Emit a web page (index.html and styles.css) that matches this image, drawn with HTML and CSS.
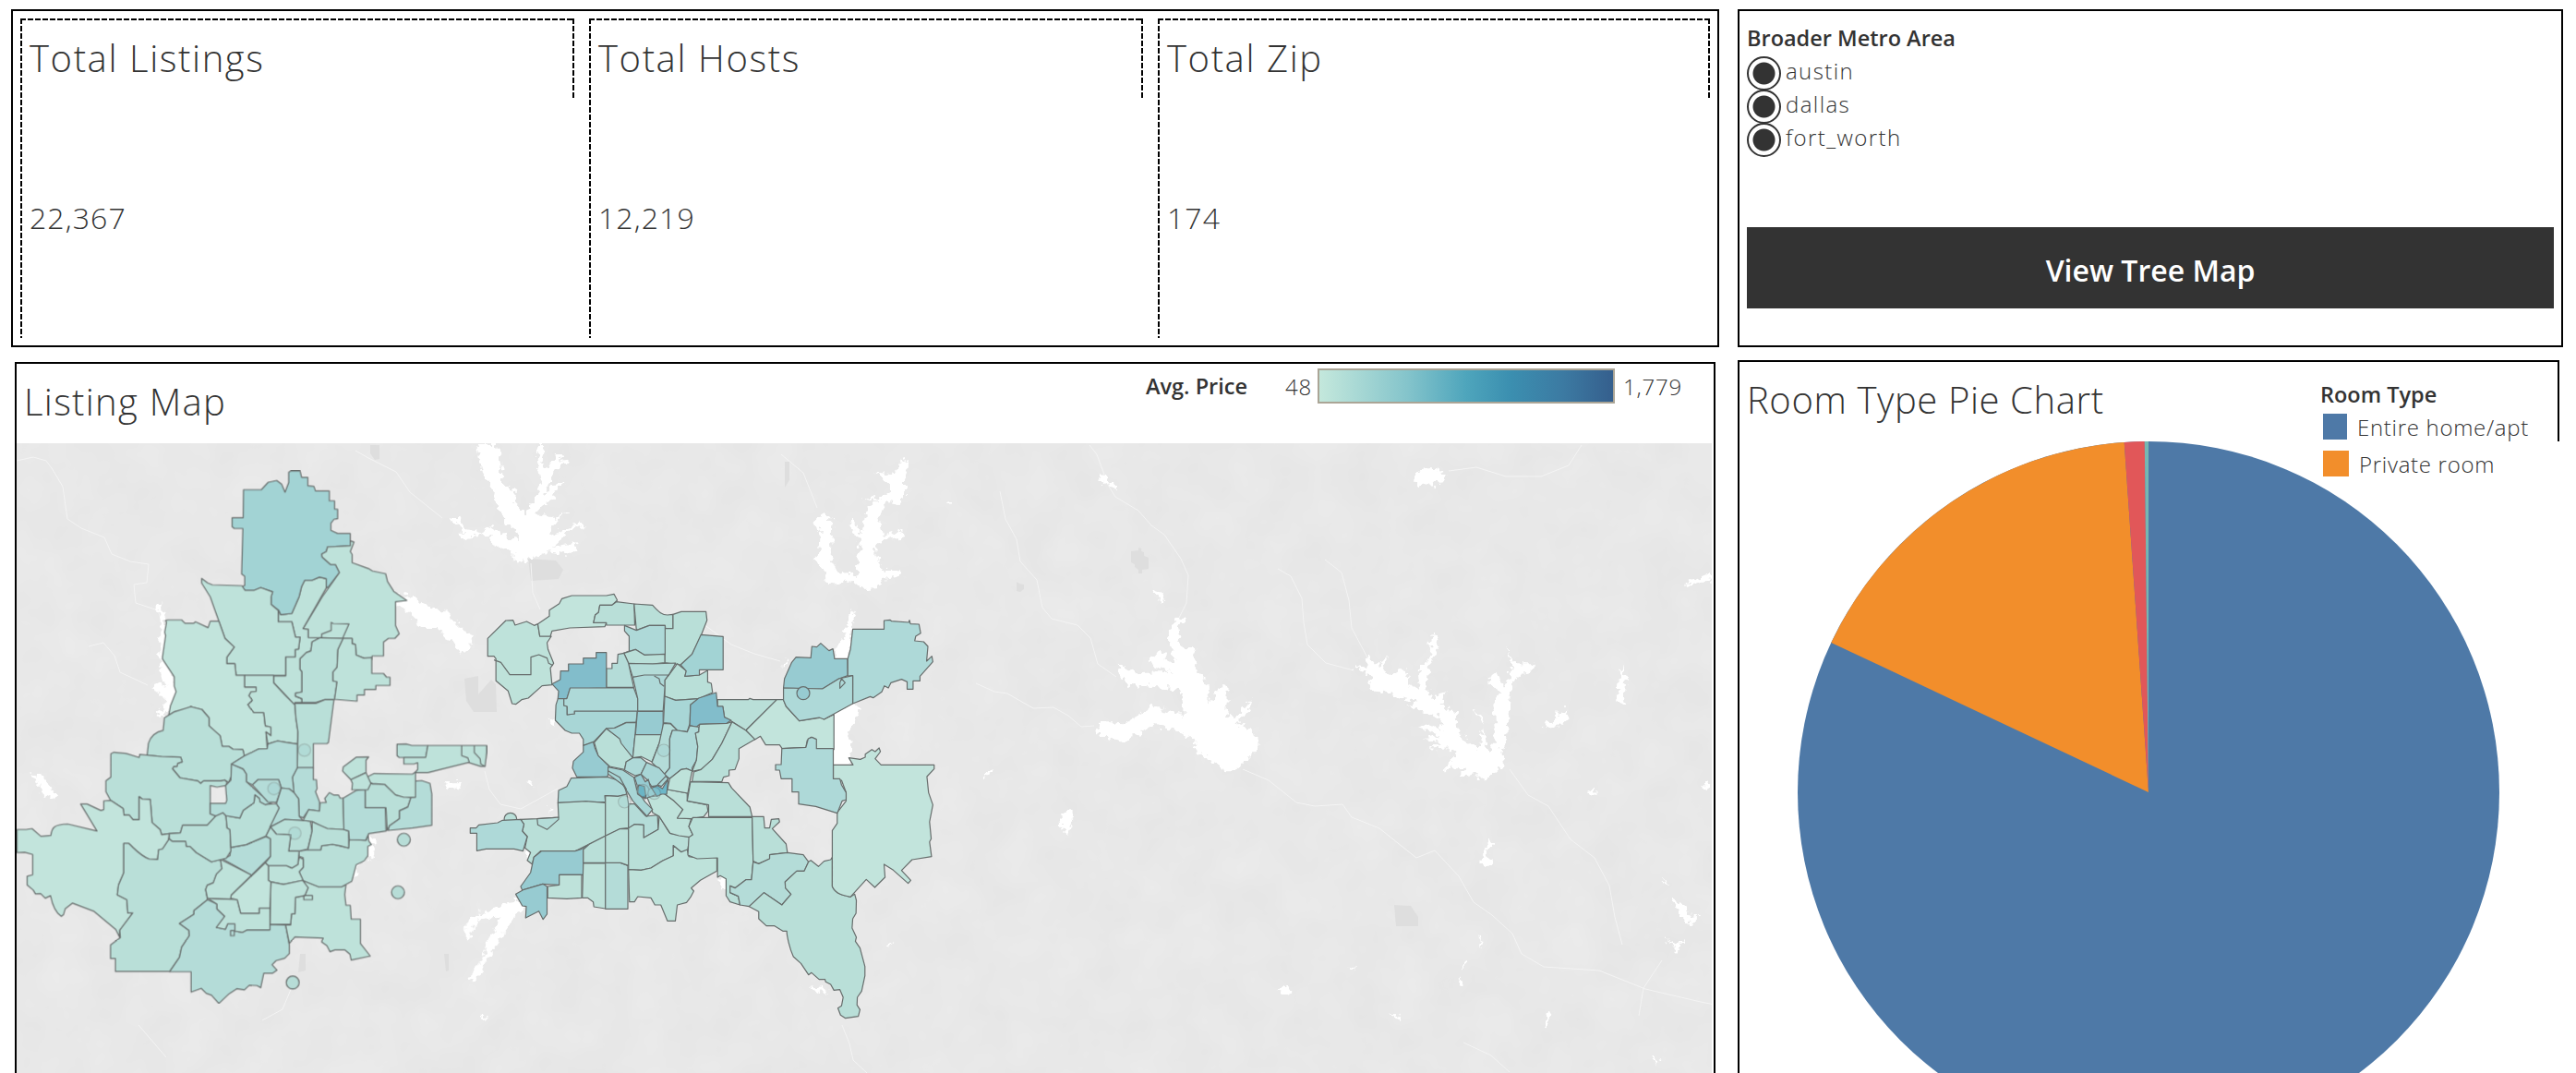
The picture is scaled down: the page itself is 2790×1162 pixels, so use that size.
FILE: index.html
```html
<!DOCTYPE html>
<html lang="en">
<head>
<meta charset="utf-8">
<title>Listings Dashboard</title>
<link rel="stylesheet" href="styles.css">
</head>
<body>
<main class="dashboard">
  <section class="kpis">
    <article class="kpi"><h2 class="title">Total Listings</h2><p class="value">22,367</p></article>
    <article class="kpi"><h2 class="title">Total Hosts</h2><p class="value">12,219</p></article>
    <article class="kpi"><h2 class="title">Total Zip</h2><p class="value">174</p></article>
  </section>

  <section class="filters">
    <h3 class="label">Broader Metro Area</h3>
    <ul class="radios">
      <li><span class="radio"></span><span class="opt">austin</span></li>
      <li><span class="radio"></span><span class="opt">dallas</span></li>
      <li><span class="radio"></span><span class="opt">fort_worth</span></li>
    </ul>
    <button class="nav-button" type="button">View Tree Map</button>
  </section>

  <section class="map-panel">
    <header class="map-head">
      <h2 class="title">Listing Map</h2>
      <div class="scale">
        <span class="label">Avg. Price</span>
        <span class="num low">48</span>
        <span class="ramp"></span>
        <span class="num high">1,779</span>
      </div>
    </header>
    <svg class="map" viewBox="18 480 1836 682" width="1836" height="682">
      <defs>
        <filter id="terrain" x="0" y="0" width="1" height="1" color-interpolation-filters="sRGB">
          <feTurbulence type="fractalNoise" baseFrequency=".022" numOctaves="3" seed="4"/>
          <feColorMatrix values=".028 0 0 0 .896  .028 0 0 0 .896  .028 0 0 0 .896  0 0 0 0 1"/>
        </filter>
        <filter id="shore" x="-.1" y="-.1" width="1.2" height="1.2">
          <feTurbulence type="fractalNoise" baseFrequency=".16" numOctaves="2" seed="7"/>
          <feDisplacementMap in="SourceGraphic" scale="12" xChannelSelector="R" yChannelSelector="G"/>
        </filter>
      </defs>
      <rect x="18" y="480" width="1836" height="682" filter="url(#terrain)"/>

      <!-- urban patches -->
      <g class="patch">
        <path d="M503 735l15-3v20l14-16 5 5 1 30h-25l-8-12zM401 482h10v15l-5 1-5-7zM325 1033h6v18l-8 2zM572 605l30 2 8 10-5 10-30 2zM850 500h5v20l-5 8zM1225 597l8-1v-3l3 1v3l3 1v4l5 2v12l-7 1v4h-4v-4l-4-3v-3l-4-2zM1101 630l3 2 5 1v5l-4 3-4-1zM481 1033h5v18l-3 1zM1510 980l18 1 8 12v10h-24z"/>
      </g>

      <!-- rivers -->
      <g class="river">
        <path d="M18 499l18-4 14 4 6 8 12 20 5 35 15 10 25 10 8 18 20 8 20 3-2 20-14 2 2 20 24 8 6 17M96 700l16-4 12 14 6 18 30 14M385 488l14 8 30 15 15 22 35 28"/>
        <path d="M150 1110l30 35M284 1105l22-12 10-24M912 1110l8 20 4 18 15 14M575 610l2 32 8 18M846 492l24 20 15 38M762 676l30 22 25 10 28 8M525 835l5 20 12 16 22 5 40-22"/>
        <path d="M1346 833l28 12 30 24 20 4 30-2 10 14 30 12 40 32 20-8 26 28 16 28 20 14 22 20 10 22 24 14 60 4 50 20 60 14 30 6 14 4"/>
        <path d="M1180 482l8 10 12 33 8 13 25 15 14 16 14 10 18 26 8 18-2 30-10 20M1083 532l6 30 12 22 4 24 18 20 6 30 10 12 28 7 14 14 8 28 20 14M1384 616l14 8 12 24 2 26 4 24 20 20 30 8M1435 606l18 14 8 30 3 30 18 34M1057 740l20 9 14 2 28 16 22-1 16 9 14 12 14-1"/>
        <path d="M1635 833l20 28 22 12 24 36 26 20 16 30 6 34 8 30M1800 1040l-20 30-5 30M1585 1129l30 14 20 18M1569 510l30-4 32 10 38 0 30-12 14-22"/>
      </g>

      <!-- lakes -->
      <g class="water" filter="url(#shore)">
        <g transform="translate(480 470) scale(.357143 .333333)">
          <path d="M100 33H162L178 100 175 150 190 170 222 180 218 225 250 262 265 235 280 200 300 160 290 110 283 33H310L300 100 315 115 345 60 368 65 350 90 384 85 335 125 305 195 320 185 345 155 372 158 340 185 330 215 300 230 275 262 335 270 385 250 340 280 325 330 420 285 430 300 395 305 330 365 405 355 400 380 350 390 310 385 250 410 215 416 210 385 150 360 145 325 75 335 55 345 45 320 70 320 15 270 50 270 70 310 120 320 145 300 200 340 235 345 225 320 190 290 170 240 150 210 155 180 120 125Z"/>
          <path d="M1390 80L1412 95 1400 150V200L1385 225 1350 220 1320 270 1330 330 1395 310 1400 335 1320 350 1310 385 1335 445 1390 442 1375 465 1335 470 1315 502 1270 504 1245 480 1195 485 1165 490 1160 450 1125 405 1140 380 1145 320 1120 285 1155 255 1180 285 1175 400 1190 440 1235 460 1260 450 1255 380 1270 360 1230 290 1235 270 1270 320 1285 240 1320 215 1270 205 1325 205 1355 185 1355 155 1310 125 1370 130Z"/>
          <path d="M1240 570L1250 590 1240 632 1226 740H1187L1190 705 1215 650ZM1175 905L1242 870 1262 890 1255 930 1225 970 1240 1000 1230 1040 1245 1082H1175Z"/>
          <path d="M0 590L30 610 60 640 85 660V700L50 690 20 660 0 650ZM315 918L345 930 340 950 325 938ZM1530 215l12 10-4 10-8-8zM1038 732l8 12-8 10z"/>
        </g>
        <g transform="translate(0 370) scale(.333333)">
          <path d="M1280 810L1340 830 1400 860 1450 880 1490 920 1532 955V1000L1500 1010 1420 930 1370 930 1330 880 1285 855Z"/>
          <path d="M505 860L525 850 530 890 540 906 560 1000 560 1090 582 1130 560 1200 520 1220 505 1210 540 1190 530 1155 490 1125 510 1110 540 1120 520 1070 520 970 525 910Z"/>
          <path d="M100 1400L135 1410 160 1450 190 1475 180 1488 140 1475 130 1440ZM1190 1595L1232 1625 1215 1638V1675L1183 1687 1160 1715 1150 1750 1140 1753 1150 1690ZM1440 1430L1500 1428 1490 1452 1460 1450ZM1560 1850L1520 1880 1510 1940 1530 1920ZM1560 2010L1520 2070 1530 2080Z"/>
        </g>
        <g transform="translate(480 780) scale(.357143 .333333)">
          <path d="M245 585L245 610 215 640 180 700 130 780 110 830 80 853 90 820 120 770 145 700 175 640 105 650 85 690 75 715 65 690 90 640 140 620 200 590Z"/>
          <path d="M245 415L266 428 255 450ZM838 510L860 515 857 550 842 545ZM1340 730L1368 718 1350 740ZM1110 865L1150 870 1168 890 1140 885ZM112 962L135 964 122 976ZM258 200L278 204 268 215ZM2 198L45 202 40 220 10 215ZM315 286l15 4-12 10z"/>
        </g>
        <g transform="translate(1140 640) scale(.465549 .333333)">
          <path d="M290 85L305 95 290 150 305 190 335 185 325 215 345 270 360 310 365 365 390 310 405 310V400L420 420 465 350 460 380 430 430 478 470V510L430 580H405L360 545 335 520 325 480 290 450 235 435 195 470 160 487 100 465 110 425 165 430 235 375 305 405 300 320 220 310 175 305 155 265 150 237 190 265 275 260 220 235 250 185 265 220 285 230 268 150Z"/>
          <path d="M735 210L750 240 780 215 765 255 790 275 820 250 830 305 855 320 850 260 875 220 885 130 900 175 875 250 870 320 885 350 915 325 905 370 940 400 945 465 990 515 1005 440 980 390 1000 410 1012 520 1025 510 1030 440 1025 370 1045 330 1010 300 1030 260 1050 310 1070 250 1055 180 1075 235 1120 235 1115 265 1085 270 1065 330 1060 470 1045 520 1048 565 1015 605 985 610 990 590 945 603 960 575 910 580 935 540 930 510 875 515 905 490 862 480 905 470 850 445 870 430 905 450 900 410 825 375 850 360 800 345 770 320 755 330 735 300 740 280 700 245 730 255Z"/>
          <path d="M18 730L35 708 50 730 35 790 20 775ZM1015 808L1028 820 1010 850 1025 885 1010 897 997 880ZM1328 245L1334 290 1328 340 1335 372 1315 360 1318 290ZM1145 420L1168 425 1170 385 1180 405 1195 382V425L1165 448 1143 438ZM1435 992L1470 1020 1485 1060 1505 1052 1478 1090 1465 1060ZM1430 1130L1450 1150 1474 1130 1452 1170ZM525 1300L540 1278 562 1312 540 1305ZM782 1368L812 1385 808 1396ZM1152 1360L1160 1362 1152 1420 1145 1418ZM955 1198L962 1208 950 1224ZM948 1255L957 1280 945 1275ZM232 0L240 -6 252 0 262 33 250 38 246 14ZM1510 635L1530 622 1525 645ZM1243 655L1262 638V660ZM1413 930L1436 960 1425 955ZM1392 1512L1412 1525 1408 1538ZM686 1216L705 1228 695 1230ZM990 1122l10 18-4 14z"/>
        </g>
        <path d="M1533 514l8-6 10-2 16 9-4 6-8 2-4 5-6-6-4 5-7 1zM1190 515l8 1 3 6-7 2zM1202 521l6 3 1 6-5-1zM1826 633l10-6 18-7v8l-16 4-10 3zM1067 836l7-3-2 6-5 2z"/>
      </g>

      <!-- Fort Worth and Denton zip codes -->
      <g class="zips" transform="translate(0 740) scale(.333333)">
        <path class="b" d="M904 -237L912 -223 948 -227 972 -282 980 -315 990 -335H1014L1038 -345 1060 -340V-310L985 -178 1002 -176V-149L1040 -148 1014 -135 1010 -105 995 -100 975 -80V-45L981 -38V28L960 32V42L981 50V62H958V72L925 35 889 -2V-24H928V-86H959V-110L970 -111 975 -150H960L948 -200H904Z"/>
        <path class="g" d="M791 -629H849L871 -653 899 -659 915 -647 926 -621 938 -652V-686L945 -690H975L980 -669H1000V-642L1020 -640 1025 -625H1070V-593H1087V-566H1097V-535L1085 -533 1075 -520V-497L1097 -487H1138V-447L1064 -443 1060 -428 1045 -420 1047 -410 1074 -386H1090L1103 -360 1064 -310 1060 -315V-340L1038 -345 1014 -335H990L980 -315 972 -282 948 -227 912 -223 906 -237 881 -256V-282L886 -297 847 -311 825 -302H796L786 -314 795 -318V-348L785 -355 789 -503H761L754 -509V-538H790Z"/>
        <path class="b" d="M1138 -463L1150 -459 1138 -428 1144 -419V-392L1197 -373 1210 -365 1253 -356 1259 -331 1280 -298 1322 -269 1285 -265V-188L1297 -161 1283 -146H1262L1246 -134V-89H1209L1208 -77 1182 -82 1157 -92 1155 -126 1144 -129V-146L1002 -149V-176L985 -178 1047 -281 1103 -360 1090 -386H1074L1047 -410 1045 -420 1060 -428 1064 -443 1138 -447Z"/>
        <path class="b" d="M655 -341L675 -326 690 -320 786 -317 796 -302H825L847 -311 886 -297 881 -282V-256L904 -237V-200H948L960 -150H975L970 -111 959 -110V-86H928V-26H767L763 -64H737V-85L761 -118 731 -146 683 -281 655 -326Z"/>
        <path class="a" d="M538 -204L546 -206H590L601 -195H629L635 -200 676 -181 683 -202H711L731 -146 761 -118 737 -85V-64H763L767 -26H795V12H832V26L815 28 809 40 820 55 805 70 825 95H857L862 138 880 142V170L864 158 868 212 840 213 794 236 789 215 757 214 744 205H722L715 170 679 138V112L656 85 620 76 590 88 565 93 548 103 554 72 572 27 566 9V-21L528 -79V-87L538 -155 535 -166 541 -198Z"/>
        <path class="b" d="M795 -26H889V-2L925 37 958 70 961 110 968 158 966 197 930 192 902 187 870 197 864 158 880 170V142L862 138 857 95H825L805 70 820 55 809 40 815 28 832 26V12H795Z"/>
        <path class="c" d="M1040 -148L1014 -135 1010 -105 995 -100 975 -80V-45L981 -38V28L960 32V42L981 50V62H1026L1055 53 1087 52 1095 -5 1082 -8V-37L1095 -52 1098 -110 1115 -146Z"/>
        <path class="b" d="M1115 -146H1144V-129L1155 -126 1157 -92 1182 -82 1208 -84V-32H1246L1256 -20H1267V7H1221V20H1184V38H1160V58L1087 52 1095 -5 1082 -8V-37L1095 -52 1098 -110Z"/>
        <path class="line" d="M1045 -148V-160L1076 -172V-198L1083 -194 1134 -193 1113 -146"/>
        <path class="c" d="M958 65H1026L1055 53H1085L1067 192 1062 196H1018V274H966L968 158 961 110Z"/>
        <path class="d" d="M966 274H1018V313H1028L1030 342 1025 352 1038 385V415L1003 410 985 437 972 432 970 375 955 355 950 305Z"/>
        <path class="c" d="M620 76L656 85 679 112V138L715 170 722 205H744L757 214 789 215 794 236 753 262 752 300 743 322 730 314 718 317H661L652 325 643 317 585 307 560 277 565 270H575L577 260 592 255 587 240 525 238 478 233 482 195C490 170 505 158 530 153L534 112 565 93Z"/>
        <path class="c" d="M360 229L370 224 410 228 452 241 454 231 525 238 587 240 592 255 577 260 575 270H565L560 277 585 307 643 317 652 325 661 317H718L730 314 738 322 733 332 705 337 683 332V424L701 431 673 461H593L586 486 550 488 525 492 520 475 494 452 488 377 462 376 452 368V443H432L420 428H403L400 407 359 380 344 352V317L360 305Z"/>
        <path class="a" d="M55 475H85L104 472 133 497 165 494C168 470 175 458 220 457L315 480 262 392H283L328 413 337 410V382L359 380 400 407 403 428H420L432 443H452V368L462 376 488 377 494 452 520 475 525 492 550 488 547 510 528 538 515 541 512 572 485 571C455 560 440 540 418 520H402V615L385 655 381 687 412 703 415 746H431L389 802 388 824 376 800 304 740 235 714 212 732 206 752 199 757C180 745 170 720 164 690L147 698 132 683 115 684 108 672 88 655V627L106 622V556L80 549 55 550Z"/>
        <path class="c" d="M402 520H418C440 540 455 560 485 571L512 572 515 541 528 538 550 505 560 513H603L606 530H618L638 550 687 580 716 572 721 602 703 620 693 648 673 656 668 670 674 703 630 738V750L583 780 614 803 615 820 590 857 583 890 551 936H375V894H359V850L391 826 389 802 431 746H415L412 703 381 687 385 655 402 615Z"/>
        <path class="d" d="M674 703L705 717V733L730 757 703 793 732 799 740 781H763V805L788 809 802 801H875L877 783 928 785 940 850V878L925 893 897 901 884 914 900 932 885 942H857L847 989 835 982 810 981 794 996 770 992 745 1008 711 1040 687 1013 670 1007 654 991 621 1003V937H551L583 890 590 857 615 820 614 803 583 780 630 750V738Z"/>
        <path class="b" d="M983 640L1035 661H1110L1124 655 1120 686 1124 721H1138L1141 766H1171V845L1203 886 1141 899 1137 880 1120 866H1088L1072 872 1062 852 1045 840 1050 828 958 824 940 845 928 785H944L947 749H958L960 695 990 690 1001 664Z"/>
        <path class="c" d="M1000 541H1042L1045 528 1080 523 1132 535 1135 508 1190 510 1196 490 1198 512 1207 524 1195 530V560L1183 577 1157 590 1143 643 1110 661H1035L983 640 972 612 985 598V567L972 562 970 545Z"/>
        <path class="b" d="M872 592H930L948 600 968 588 972 565 985 572V598L972 612 985 640 921 653 880 645 872 640Z"/>
        <path class="b" d="M880 645L921 653 983 640 1001 664 990 690 960 695 958 749H947L944 783H877Z"/>
        <path class="b" d="M674 698L771 703 782 747H842V730H877V801H802L788 809 763 805V781H740L732 799 703 793 730 757 705 733V717Z"/>
        <path class="a" d="M749 698L751 688 862 583 872 592V640L880 645 877 730H842V747H782L771 703Z"/>
        <path class="b" d="M716 572L817 623 751 688 749 701 674 698 668 670 673 656 693 648 703 620 721 602Z"/>
        <path class="d" d="M725 572L747 560 750 533 800 524 864 498 879 505V562L817 623Z"/>
        <path class="c" d="M550 488L586 486 593 461H673L701 431 724 420 734 430 738 470 747 475 750 545 735 568 687 580 638 550 618 530H606L603 513H560L550 505Z"/>
        <path class="c" d="M734 430L779 438 790 413 825 388 828 362 843 374 845 385 862 394 898 391 907 405 864 496 800 524 750 533 747 475 738 470Z"/>
        <path class="d" d="M752 262L790 278 801 295V320L845 360 885 387 862 394 845 385 843 374 828 362 825 388 790 413 779 438 734 430 724 420 701 431 683 424V390H733L737 380 733 332 750 315Z"/>
        <path class="d" d="M752 262L794 236 840 213 868 212 870 197 902 187 930 192 966 197V274L950 305 955 355 940 343 914 340 905 313H838L820 330 801 320V295L790 278Z"/>
        <path class="d" d="M838 313H905L914 340 898 387 870 385 820 330Z"/>
        <path class="d" d="M914 340L940 343 955 355 970 375 972 432 985 447 925 442 877 467 907 405 898 391Z"/>
        <path class="c" d="M925 442L1008 447 1014 480 1000 538 972 545H938L945 492 898 490 879 467Z"/>
        <path class="c" d="M879 467L898 490 945 492 938 545H972L968 588 948 600 930 592H872L862 583 879 562V505L864 496Z"/>
        <path class="c" d="M985 445L1003 410 1038 415 1040 388 1060 387 1055 374 1070 355 1085 363H1100L1105 373H1115L1117 475 1064 472 1045 465 1014 449Z"/>
        <path class="c" d="M1014 449L1064 472 1117 475 1133 480V535L1106 528 1080 523 1045 528 1042 541H1000L1014 480Z"/>
        <path class="d" d="M1115 373L1157 348 1187 345V404H1252L1254 480 1198 488 1188 510 1135 508 1133 480 1117 475Z"/>
        <path class="c" d="M1187 316L1210 327 1250 328 1285 362 1335 371 1325 402 1298 414V440L1265 463 1258 478 1254 404H1187Z"/>
        <path class="d" d="M1348 318L1370 316 1397 325 1403 360V461L1340 470 1261 478 1265 463 1298 440V414L1325 402 1335 371 1348 370Z"/>
        <path class="b" d="M1195 303L1215 293 1340 295 1350 288V370H1312L1285 362 1250 328 1210 325 1187 316Z"/>
        <path class="b" d="M1157 240L1198 239 1189 250V290L1140 313 1113 285 1115 272Z"/>
        <path class="b" d="M1140 313L1189 290 1195 303 1205 325 1195 346H1143L1145 325Z"/>
        <path class="c" d="M1290 198L1320 197 1338 202H1390L1383 241H1297L1290 235Z"/>
        <path class="b" d="M1390 202H1581V224L1576 270 1562 270 1522 257 1390 290H1348L1357 280V258L1345 262H1312V241H1383Z"/>
        <path class="line" d="M1500 202V235L1520 242 1525 257M1541 202V225L1560 245 1562 262 1576 270M749 803H761V820H749ZM987 689H1015V703H987Z"/>
        <g class="dots"><circle cx="1312" cy="508" r="21"/><circle cx="1293" cy="679" r="21"/><circle cx="951" cy="972" r="21"/></g>
        <g class="dots faint"><circle cx="989" cy="217" r="20"/><circle cx="890" cy="342" r="20"/><circle cx="958" cy="487" r="20"/></g>
      </g>

      <!-- Dallas zip codes, north -->
      <g class="zips" transform="translate(480 470) scale(.357143 .333333)">
        <path class="b" d="M190 606L212 605 218 621 253 609 276 622 287 617 293 657H328L315 678 318 700 335 745 325 760 330 815 300 818 258 858 238 863 220 878 209 876 197 835 160 802V730L154 722H135V664Z"/>
        <path class="line" d="M154 734L175 742 202 782H266V725L290 717 315 728 320 745 333 752"/>
        <path class="a" d="M287 617L322 592V572L352 551 360 535 390 525H495L518 520 528 540 512 556H475L471 580 461 588 456 613H495L490 626 384 630 330 640 325 657H293Z"/>
        <path class="c" d="M475 556H512L525 545 579 552 581 621H495V613H456L461 588 471 580Z"/>
        <path class="c" d="M579 552L635 556C655 580 665 588 680 588L697 586V632H674L673 622H625L586 638Z"/>
        <path class="c" d="M697 586L722 577H797L800 605 782 655 755 715 720 750 672 743V632H697Z"/>
        <path class="e" d="M550 622L586 638 625 622H673V717L610 718 583 700 548 712 564 705V657L550 640Z"/>
        <path class="c" d="M548 712L583 700 610 718 672 715V743L635 747 562 745Z"/>
        <path class="c" d="M710 746L738 770 733 787 777 783 802 768V806L813 810 817 840 775 860 705 865 672 852V800L690 775Z"/>
        <path class="g" d="M782 652L849 658V766H777V783L733 787 737 770 720 750 755 715Z"/>
        <path class="d" d="M562 745L635 747 705 744 683 785 575 790Z"/>
        <path class="d" d="M530 716L548 712 562 745 578 823H495V762H512V745H528Z"/>
        <path class="i" d="M464 710H495V825L385 828 375 860H348L350 835 330 812 355 798 356 770H380V747H425V728H464Z"/>
        <path class="f" d="M348 860H366V882L376 885V912L398 909V900H589L585 937H555L520 955 495 957 455 1002 425 1012V992L413 972H390L370 963 340 930 342 880Z"/>
        <path class="e" d="M385 825H578L590 860V900H398V909L376 912V885L366 882V860H375Z"/>
        <path class="e" d="M575 790L610 783H683L672 800V825L667 900H590V860Z"/>
        <path class="line" d="M640 786L655 795 658 810 670 820"/>
        <path class="f" d="M672 852L705 865 775 860 750 880 748 940 740 967 710 963 690 940 668 938Z"/>
        <path class="h" d="M589 901H667V978H583Z"/>
        <path class="c" d="M832 863H925L930 859 940 863H1012L918 963 873 932 853 920 848 885H832Z"/>
        <path class="a" d="M1012 863H1032L1040 885 1080 932 1150 921 1155 927 1185 911V1025H1130L1128 990 1115 985 1104 995 1100 1018 1028 1022 1020 1010H978L962 982 945 993 918 963Z"/>
        <path class="i" d="M775 858L828 840 832 885H848L853 920 873 930 860 940 778 943 768 952 748 947 750 880Z"/>
        <path class="h" d="M1145 680L1170 704 1182 698 1187 730H1226L1227 785 1200 795 1150 828 1032 825 1035 795 1057 742 1070 725 1115 727 1118 690 1133 692Z"/>
        <path class="e" d="M1242 634H1337V606L1355 604 1360 608 1412 612 1414 605 1417 617 1443 618 1448 647 1433 657 1430 672 1457 675 1470 690 1466 738 1482 722 1485 740 1446 787V802H1425V829H1407V805L1390 797 1358 808 1350 825 1338 818 1330 838 1304 857 1295 853 1242 876V785L1227 786V730L1235 700Z"/>
        <path class="e" d="M1032 825L1150 828 1200 795 1242 785V876L1155 927 1140 921 1080 932 1040 885 1032 865Z"/>
        <path class="line" d="M1208 795L1219 808 1203 826V808Z"/>
        <ellipse class="h" cx="1092" cy="842" rx="19.5" ry="21"/>
      </g>

      <!-- Dallas zip codes, centre and south -->
      <g class="zips" transform="translate(480 780) scale(.357143 .333333)">
        <path class="c" d="M495 27L540 62 575 122 555 135 550 160 505 150 470 115 458 72Z"/>
        <path class="f" d="M495 27L520 25 555 8 585 7 582 47 575 122 540 75 535 60Z"/>
        <path class="c" d="M582 47H667L655 75 633 135 600 118 575 122Z"/>
        <path class="d" d="M668 10L690 12 710 33 695 33 687 60V155L670 177 633 137 655 75Z"/>
        <path class="e" d="M710 33L740 38 748 18 776 22 775 38 765 42 772 85 768 130 755 155V165L738 157 722 160 687 190 670 177 687 155V60L695 33Z"/>
        <path class="c" d="M776 22L778 13 860 10 876 5 845 75 816 127 782 160 755 166 768 130 772 85 765 42 775 38Z"/>
        <path class="c" d="M876 5L918 33 945 62 897 92V125L885 160 867 162V180L850 185 845 200 755 198 760 168 782 160 816 127 845 75Z"/>
        <path class="h" d="M455 70L460 90 470 115 505 152 498 184H405L392 155 395 133 425 103V82Z"/>
        <path class="e" d="M388 188L498 184 530 195 550 215 557 240 530 247 490 245 492 265 348 268 350 228 375 215Z"/>
        <path class="c" d="M348 268L433 263 492 268V376L400 425H295L275 445 270 468 255 455 265 430 248 415 255 378 240 360 245 338 235 322 285 320 350 315Z"/>
        <path class="d" d="M285 320L332 317 350 315V322L315 355 287 340Z"/>
        <ellipse class="c" cx="204" cy="321" rx="19" ry="20"/>
        <path class="e" d="M82 350H100L108 340 165 333 180 325 235 322 245 338 240 360 255 378 242 425 215 418H130L102 424V367H82Z"/>
        <path class="h" d="M275 445L298 425H400L420 418 443 403 440 412 425 420V502H352V535L302 532 240 552 235 540 265 495Z"/>
        <path class="h" d="M220 565L245 550 302 532 315 540V630L303 647 290 620 250 642 252 605 240 603Z"/>
        <path class="b" d="M352 502H420V577L375 580 317 577V540L352 535Z"/>
        <path class="b" d="M425 465H492V612L457 606 455 590 438 577H422Z"/>
        <path class="d" d="M492 463H538L560 472V613H492Z"/>
        <path class="c" d="M425 420L443 403 492 376V463H425Z"/>
        <path class="c" d="M492 245L530 247 557 240 562 272V350L535 353 492 376Z"/>
        <path class="c" d="M492 376L535 353 562 352V472L538 463H492Z"/>
        <path class="d" d="M562 272H580L615 312 650 308 652 355 608 382V340L580 338 562 352Z"/>
        <path class="c" d="M562 350L580 338 608 340V382L652 355 655 312 680 355 688 367 748 380 740 430 722 428 698 407V440L665 457 630 480 600 487 562 485Z"/>
        <path class="b" d="M562 485L600 487 630 480 665 457 698 440V407L722 428 740 420 745 443 770 447 830 443V490L780 520 752 545 760 555 750 575 738 592 710 600 704 652H680L660 600H642L630 577 590 573 580 590H565Z"/>
        <path class="b" d="M618 250L650 245 668 236 700 262 727 290 710 318 752 320 745 345 757 372 748 380 715 375 688 367 655 312 635 300 632 285Z"/>
        <path class="b" d="M680 225L740 237V262L800 275 803 295 790 313 752 320 710 318 727 290 700 262 668 236Z"/>
        <path class="b" d="M687 190L722 160 738 157 755 165 748 200 742 237 680 225Z"/>
        <path class="c" d="M750 200L865 203 875 220 930 282 937 313H805V275L740 262Z"/>
        <path class="c" d="M757 316H937L940 460 935 518H918L885 545 870 538V560L895 572 900 600 870 590 858 570V515L840 505 832 510V447L770 450 742 438 745 380 757 372 745 345Z"/>
        <path class="c" d="M937 313H972L975 350H990L995 322 1018 320 1020 330 998 352 1040 402 1044 430 990 437V450L957 466 940 458Z"/>
        <path class="d" d="M957 466L990 450V437L1044 430 1092 437 1108 460 1095 490H1072L1037 525 1038 545 1055 565 1027 600 973 560 928 605 900 600 895 572 870 560V538L885 545 918 518H935L940 460Z"/>
        <path class="c" d="M928 605L973 560 1027 600 1055 565 1038 545 1037 525 1072 490H1095L1108 460 1115 455 1138 475 1155 458 1175 453 1180 445V540C1190 565 1215 570 1235 574L1248 565 1253 585 1252 627 1242 645 1240 675 1253 705 1250 718 1264 740 1279 800V830L1269 880 1256 900 1255 925 1264 940 1259 962 1220 968 1205 958 1197 935 1208 928 1213 900 1203 875 1185 877 1175 858 1160 850 1158 842H1140L1117 820 1108 827 1085 790 1062 768C1050 740 1042 700 1042 685H1030L1005 668H980L957 645V622Z"/>
        <path class="a" d="M1183 145H1243L1230 122 1265 127 1280 120V110L1300 95 1310 102 1322 90 1326 102 1310 125 1328 145H1489V158L1467 183 1472 235 1485 275 1475 330 1480 385 1475 395 1481 443 1422 453 1390 488 1418 520 1410 530 1365 487 1337 468 1340 510 1309 543 1283 517 1235 574C1215 570 1190 565 1180 540V358L1195 335V300L1222 262V235L1208 195 1183 190Z"/>
        <path class="e" d="M1027 92L1100 88 1107 60 1118 55 1132 62V92H1183V190H1203L1208 210 1222 235V258L1210 262 1195 302 1130 280 1078 272V233H1058V190H1025L1020 162H1008V144H1025Z"/>
        <path class="e" d="M575 122H600L617 137 600 175 582 180 550 162 555 135Z"/>
        <path class="f" d="M617 137L655 155 682 187 665 210 632 215 620 195 600 175Z"/>
        <path class="f" d="M500 152L545 162 578 185 587 225 612 265 635 290 618 312 575 262 560 235 545 210 500 175Z"/>
        <path class="line" d="M500 164L535 185 556 225"/>
        <path class="h" d="M600 175L613 200 622 192 628 215 648 240 612 255 590 240 588 210 580 185Z"/>
        <path class="k" d="M593 210L610 215 615 250H603L590 235Z"/>
        <path class="j" d="M632 220L650 212 665 222 682 190 678 240 662 240 648 247Z"/>
        <path class="f" d="M650 210L675 182 682 190 662 215Z"/>
        <g class="dots faint"><ellipse cx="669" cy="98" rx="19" ry="20"/><ellipse cx="550" cy="265" rx="19" ry="20"/><ellipse cx="605" cy="228" rx="19" ry="20"/><ellipse cx="640" cy="237" rx="19" ry="20"/></g>
      </g>
    </svg>
  </section>

  <section class="pie-panel">
    <header class="pie-head">
      <h2 class="title">Room Type Pie Chart</h2>
      <div class="legend">
        <h3 class="label">Room Type</h3>
        <p class="key"><span class="swatch home"></span>Entire home/apt</p>
        <p class="key"><span class="swatch private"></span>Private room</p>
      </div>
    </header>
    <svg class="pie" viewBox="-380 -380 760 684" width="760" height="684">
      <circle r="380" fill="#4e79a7"/>
      <path fill="#f28e2b" d="M0 0L-343.7 -162.1A380 380 0 0 1 -26.3 -379.1Z"/>
      <path fill="#e15759" d="M0 0L-26.3 -379.1A380 380 0 0 1 -4.2 -380Z"/>
      <path fill="#76b7b2" d="M0 0L-4.2 -380H0Z"/>
    </svg>
  </section>
</main>
</body>
</html>
```
FILE: styles.css
```css
* { box-sizing: border-box; margin: 0; padding: 0; }

body {
  width: 2790px;
  height: 1162px;
  overflow: hidden;
  background: #fff;
  color: #333;
  font-family: "Open Sans", "Noto Sans", sans-serif;
  font-size: 24px;
  font-weight: 300;
}

.dashboard {
  display: grid;
  grid-template-columns: 1850px 894px;
  grid-template-rows: 366px 772px;
  column-gap: 20px;
  row-gap: 14px;
  padding: 10px 12px 0;
}

.title { font-size: 40px; font-weight: 300; line-height: 56px; letter-spacing: 1.6px; white-space: nowrap; }
.label { font-size: 23.5px; font-weight: 600; line-height: 32px; white-space: nowrap; }

/* KPI strip */
.kpis {
  display: grid;
  grid-template-columns: 600px 600px 598px;
  column-gap: 16px;
  padding: 8px;
  border: 2px solid #000;
}
.kpi {
  --v: repeating-linear-gradient(#000 0 6px, transparent 6px 8px);
  --h: repeating-linear-gradient(90deg, #000 0 6px, transparent 6px 8px);
  height: 346px;
  padding: 15px 0 0 10px;
  background:
    var(--h) 0 0 / 100% 2px no-repeat,
    var(--v) 0 0 / 2px 100% no-repeat,
    var(--v) 100% 0 / 2px 88px no-repeat;
}
.value { margin-top: 123px; font-size: 32px; line-height: 44px; letter-spacing: 1.1px; }

/* Filter box */
.filters { padding: 13px 8px 0; border: 2px solid #000; }
.radios { list-style: none; padding-top: 4px; }
.radios li { display: flex; align-items: center; gap: 5px; height: 36px; }
.radio {
  width: 37px;
  height: 37px;
  border: 2px solid #333;
  border-radius: 50%;
  background: radial-gradient(circle, #333 11.5px, transparent 12.5px);
}
.opt { margin-top: -4px; line-height: 32px; letter-spacing: 1.4px; }
.nav-button {
  display: block;
  width: 874px;
  height: 88px;
  margin-top: 77px;
  padding-top: 5px;
  border: 0;
  background: #333;
  color: #fff;
  font: 600 32px/44px "Open Sans", "Noto Sans", sans-serif;
}

/* Map */
.map-panel {
  width: 1842px;
  margin: 2px 0 0 4px;
  border: 2px solid #000;
  border-bottom: 0;
}
.map-head { display: flex; justify-content: space-between; height: 86px; padding: 13px 34px 0 8px; }
.map-head .title { letter-spacing: 1.3px; }
.scale { display: flex; align-items: center; height: 38px; margin-top: -8px; }
.scale .label { width: 113px; }
.num { letter-spacing: .8px; }
.low { width: 28px; margin-left: 38px; }
.high { width: 64px; }
.ramp {
  width: 322px;
  height: 38px;
  margin: 0 9px 0 7px;
  border: 2px solid #aba596;
  background: linear-gradient(90deg, #c4e8dc, #84c4cb 30%, #4ea5bc 50%, #3b8fb0 65%, #3c7aa2 83%, #355f8d);
}
.map { display: block; }
.patch { fill: #dedede; }
.river { fill: none; stroke: #f4f4f4; stroke-width: 1; }
.water { fill: #fff; }
.zips path, .zips circle, .zips ellipse {
  stroke: #676d6c;
  stroke-width: 1.2;
  stroke-linejoin: round;
  vector-effect: non-scaling-stroke;
}
.a { fill: #c2e4dc; }
.b { fill: #bee2da; }
.c { fill: #b9dfd8; }
.d { fill: #b4dcd8; }
.e { fill: #aed9d8; }
.f { fill: #a8d6d6; }
.g { fill: #a2d3d4; }
.h { fill: #97cbd1; }
.i { fill: #82bdcb; }
.j { fill: #6cb7c8; }
.k { fill: #55a9c0; }
.line { fill: none; }
.dots { fill: #b7ddd7; }
.dots.faint { fill: #9fd2d2; opacity: .3; }

/* Pie */
.pie-panel { width: 890px; border-top: 2px solid #000; border-left: 2px solid #000; }
.pie-head {
  position: relative;
  z-index: 1;
  display: flex;
  justify-content: space-between;
  height: 86px;
  padding: 13px 31px 0 8px;
  border-right: 2px solid #000;
}
.pie-head .title { letter-spacing: .6px; }
.legend { width: 226px; height: 126px; padding-top: 6px; }
.legend .label { height: 31px; }
.key { display: flex; align-items: center; gap: 11px; height: 40px; padding-left: 3px; letter-spacing: .7px; white-space: nowrap; }
.swatch { width: 28px; height: 28px; }
.home { background: #4e79a7; }
.private { background: #f28e2b; }
.pie { display: block; margin-left: 63px; }
```
